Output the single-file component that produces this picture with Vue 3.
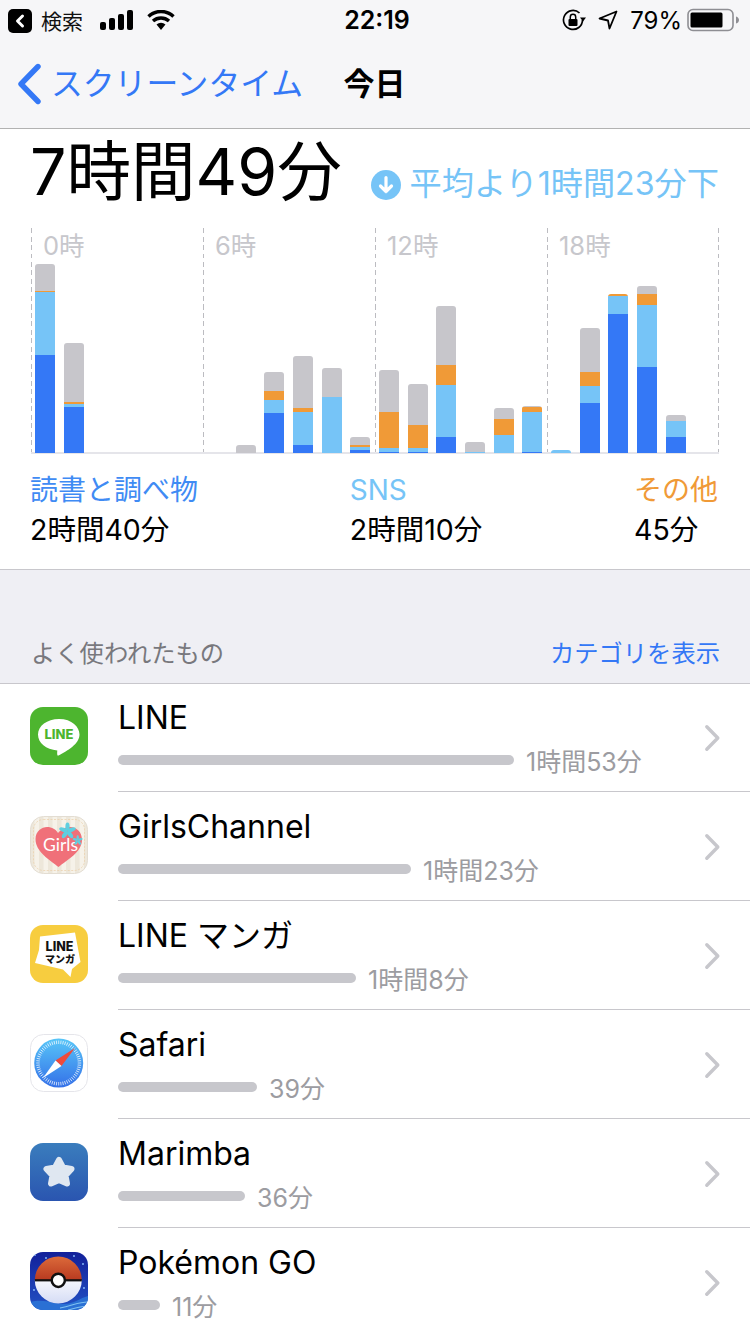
<script setup>
const hourGroups = [
  { label: '0時', bars: [
    { g: 27, o: 1, l: 63, b: 98 }, { g: 59, o: 2, l: 3, b: 46 }, null, null, null, null
  ] },
  { label: '6時', bars: [
    null, { g: 8 }, { g: 19, o: 9, l: 13, b: 40 }, { g: 52, o: 4, l: 33, b: 8 }, { g: 29, l: 56 }, { g: 8, o: 2, l: 3, b: 3 }
  ] },
  { label: '12時', bars: [
    { g: 42, o: 36, l: 4, b: 1 }, { g: 41, o: 23, l: 4, b: 1 }, { g: 59, o: 20, l: 52, b: 16 }, { g: 10, l: 1 }, { g: 11, o: 16, l: 18 }, { g: 1, o: 5, l: 40, b: 1 }
  ] },
  { label: '18時', bars: [
    { l: 3 }, { g: 44, o: 14, l: 17, b: 50 }, { o: 2, l: 18, b: 139 }, { g: 8, o: 11, l: 62, b: 86 }, { g: 6, l: 16, b: 16 }, null
  ] }
]
const segments = ['g', 'o', 'l', 'b']
const legend = [
  { name: '読書と調べ物', time: '2時間40分', cls: 'c-blue' },
  { name: 'SNS', time: '2時間10分', cls: 'c-sky' },
  { name: 'その他', time: '45分', cls: 'c-orange' }
]
const apps = [
  { name: 'LINE', width: 396, time: '1時間53分', icon: 'line' },
  { name: 'GirlsChannel', width: 293, time: '1時間23分', icon: 'girls' },
  { name: 'LINE マンガ', width: 238, time: '1時間8分', icon: 'manga' },
  { name: 'Safari', width: 139, time: '39分', icon: 'safari' },
  { name: 'Marimba', width: 127, time: '36分', icon: 'marimba' },
  { name: 'Pokémon GO', width: 42, time: '11分', icon: 'pokemon' }
]
const ticks = Array.from({ length: 60 }, (_, i) => i * 6)
const petals = [0, 72, 144, 216, 288]
</script>

<template>
  <div class="page">
    <header class="top">
      <div class="status">
        <div class="status-left">
          <svg class="chip" width="24" height="24" viewBox="0 0 24 24">
            <rect width="24" height="24" rx="5" fill="#000" />
            <path d="M14.5 7 L9.5 12 L14.5 17" fill="none" stroke="#fff" stroke-width="3" stroke-linecap="round" stroke-linejoin="round" />
          </svg>
          <span class="carrier">検索</span>
          <svg class="signal" width="33" height="20" viewBox="0 0 33 20">
            <rect x="0" y="12" width="6" height="8" rx="2" fill="#000" />
            <rect x="9" y="8" width="6" height="12" rx="2" fill="#000" />
            <rect x="18" y="4" width="6" height="16" rx="2" fill="#000" />
            <rect x="27" y="0" width="6" height="20" rx="2" fill="#000" />
          </svg>
          <svg class="wifi" width="28" height="20" viewBox="0 0 28 20">
            <path d="M1.500 6.500 A18 18 0 0 1 26.500 6.500" fill="none" stroke="#000" stroke-width="3.400" />
            <path d="M6 11 A12 12 0 0 1 22 11" fill="none" stroke="#000" stroke-width="3.400" />
            <path d="M9.500 14.500 A7 7 0 0 1 18.500 14.500 L14 20 Z" fill="#000" />
          </svg>
        </div>
        <div class="clock">22:19</div>
        <div class="status-right">
          <svg width="24" height="22" viewBox="0 0 24 22">
            <path d="M20.500 11 A9.500 9.500 0 1 1 17.500 4" fill="none" stroke="#000" stroke-width="1.700" />
            <path d="M18 8.500 L24 8.500 L21 12.500 Z" fill="#000" />
            <rect x="6.500" y="10" width="9" height="7" rx="1" fill="#000" />
            <path d="M8.300 10 V8 A2.700 2.700 0 0 1 13.700 8 V10" fill="none" stroke="#000" stroke-width="1.500" />
          </svg>
          <svg class="loc" width="20" height="20" viewBox="0 0 20 20">
            <path d="M18.500 1.500 L1.500 8.500 L10 10.500 L11.500 18.500 Z" fill="none" stroke="#000" stroke-width="1.800" stroke-linejoin="round" />
          </svg>
          <span class="pct">79%</span>
          <svg class="batt" width="52" height="24" viewBox="0 0 52 24">
            <rect x="1" y="1.500" width="45" height="21" rx="5" fill="none" stroke="#8e8e93" stroke-width="1.600" />
            <rect x="3.500" y="4.500" width="32" height="15" rx="1.500" fill="#000" />
            <path d="M49 8.500 C51 9 52 10.500 52 12 C52 13.500 51 15 49 15.500 Z" fill="#8e8e93" />
          </svg>
        </div>
      </div>
      <nav class="nav">
        <div class="back">
          <svg width="26" height="42" viewBox="0 0 26 42">
            <path d="M22 3.500 L5 21 L22 38.500" fill="none" stroke="#3478f6" stroke-width="5.400" stroke-linecap="round" stroke-linejoin="round" />
          </svg>
          <span>スクリーンタイム</span>
        </div>
        <div class="nav-title">今日</div>
        <div></div>
      </nav>
    </header>

    <section class="summary">
      <div class="headline">
        <h1 class="total">7時間49分</h1>
        <div class="avg">
          <svg width="30" height="30" viewBox="0 0 30 30">
            <circle cx="15" cy="15" r="15" fill="#76c4f7" />
            <path d="M15 7.500 V21.500 M9.500 16 L15 21.500 L20.500 16" fill="none" stroke="#fff" stroke-width="3.200" stroke-linecap="round" stroke-linejoin="round" />
          </svg>
          <span>平均より1時間23分下</span>
        </div>
      </div>

      <div class="chart">
        <div v-for="group in hourGroups" :key="group.label" class="group">
          <span class="hour">{{ group.label }}</span>
          <div v-for="(bar, i) in group.bars" :key="i" class="slot">
            <div v-if="bar" class="bar">
              <template v-for="s in segments" :key="s">
                <div v-if="bar[s]" :class="['seg', 'seg-' + s]" :style="{ height: bar[s] + 'px' }"></div>
              </template>
            </div>
          </div>
        </div>
      </div>

      <div class="legend">
        <div v-for="item in legend" :key="item.name" class="legend-item">
          <div :class="['legend-name', item.cls]">{{ item.name }}</div>
          <div class="legend-time">{{ item.time }}</div>
        </div>
      </div>
    </section>

    <div class="list-head">
      <span class="list-title">よく使われたもの</span>
      <span class="list-link">カテゴリを表示</span>
    </div>

    <ul class="list">
      <li v-for="app in apps" :key="app.name" class="row">
        <div class="icon">
          <svg v-if="app.icon === 'line'" width="58" height="58" viewBox="0 0 58 58">
            <rect width="58" height="58" rx="13" fill="#4db52f" />
            <path d="M29 12 C42 12 49.500 20 49.500 27.500 C49.500 37 37 44 28.500 48.500 C27 49.300 27 46.500 27.300 43.500 C16 42.500 8 36 8 27.500 C8 19 17 12 29 12 Z" fill="#fff" />
            <text x="29" y="31.500" text-anchor="middle" class="t-line">LINE</text>
          </svg>
          <svg v-else-if="app.icon === 'girls'" width="58" height="58" viewBox="0 0 58 58">
            <defs>
              <pattern id="stripe" width="9" height="9" patternUnits="userSpaceOnUse">
                <rect width="9" height="9" fill="#f6f2e9" />
                <rect width="4.500" height="9" fill="#ede7da" />
              </pattern>
            </defs>
            <rect x=".5" y=".5" width="57" height="57" rx="13" fill="url(#stripe)" stroke="#e3ddd2" />
            <rect x="3.500" y="3.500" width="51" height="51" rx="10" fill="none" stroke="#ebcfa8" stroke-width=".7" stroke-dasharray="2 1.500" />
            <path d="M28.500 51 C20 44 5.500 36 5.500 23 C5.500 15 12 11 17 11 C22 11 26 13.500 28 17 C31 13.500 35 11 40 11 C47 11 52 16.500 52 24 C52 36 37 44 28.500 51 Z" fill="#f07079" />
            <text x="13" y="34.500" class="t-girls">Girls</text>
            <g fill="#5fcfe0">
              <ellipse v-for="p in petals" :key="p" cx="37.500" cy="10.600" rx="2.100" ry="4.200" :transform="`rotate(${p} 37.500 15)`" />
              <ellipse v-for="p in petals" :key="'s' + p" cx="47.700" cy="21.600" rx="1.200" ry="2.500" :transform="`rotate(${p} 47.700 24.300)`" />
            </g>
          </svg>
          <svg v-else-if="app.icon === 'manga'" width="58" height="58" viewBox="0 0 58 58">
            <rect width="58" height="58" rx="13" fill="#f7cd3f" />
            <path d="M10 11.500 L45 7.500 L50.500 37 L42 44 L40.500 52 L33 44.500 L5 38 L9 25 Z" fill="#fff" />
            <text text-anchor="middle">
              <tspan x="29.500" y="26" class="t-manga1">LINE</tspan>
              <tspan x="30" y="37.500" class="t-manga2">マンガ</tspan>
            </text>
          </svg>
          <svg v-else-if="app.icon === 'safari'" width="58" height="58" viewBox="0 0 58 58">
            <defs>
              <linearGradient id="saf" x1="0" y1="0" x2="0" y2="1">
                <stop offset="0" stop-color="#58c6f8" />
                <stop offset="1" stop-color="#3470e8" />
              </linearGradient>
            </defs>
            <rect x=".5" y=".5" width="57" height="57" rx="13" fill="#fff" stroke="#e5e5ea" />
            <circle cx="28.700" cy="29" r="24.500" fill="url(#saf)" />
            <g stroke="#fff" stroke-width=".8" opacity=".85">
              <line v-for="t in ticks" :key="t" x1="28.700" y1="6.500" x2="28.700" y2="10" :transform="`rotate(${t} 28.700 29)`" />
            </g>
            <path d="M45 14 L31.500 32 L25.500 26.500 Z" fill="#ef4a3c" />
            <path d="M13 44 L25.500 26.500 L31.500 32 Z" fill="#fff" />
          </svg>
          <svg v-else-if="app.icon === 'marimba'" width="58" height="58" viewBox="0 0 58 58">
            <defs>
              <linearGradient id="mar" x1="0" y1="0" x2="0" y2="1">
                <stop offset="0" stop-color="#3a7dbd" />
                <stop offset="1" stop-color="#2a55b0" />
              </linearGradient>
            </defs>
            <rect width="58" height="58" rx="13" fill="url(#mar)" />
            <path d="M29 17 L33 24.500 L41.500 26 L35.500 32.500 L37 40.500 L29 37 L21 40.500 L22.500 32.500 L16.500 26 L25 24.500 Z" fill="#dfe7f1" stroke="#dfe7f1" stroke-width="6" stroke-linejoin="round" />
          </svg>
          <svg v-else width="58" height="58" viewBox="0 0 58 58">
            <defs>
              <linearGradient id="sky" x1="0" y1="0" x2="0" y2="1">
                <stop offset="0" stop-color="#12209a" />
                <stop offset="1" stop-color="#2352c4" />
              </linearGradient>
              <linearGradient id="red" x1="0" y1="0" x2="0" y2="1">
                <stop offset="0" stop-color="#dc6a3a" />
                <stop offset="1" stop-color="#b83a20" />
              </linearGradient>
              <linearGradient id="wht" x1="0" y1="0" x2="0" y2="1">
                <stop offset="0" stop-color="#f6f7fd" />
                <stop offset="1" stop-color="#d5dcf5" />
              </linearGradient>
              <clipPath id="clip"><rect width="58" height="58" rx="13" /></clipPath>
            </defs>
            <g clip-path="url(#clip)">
              <rect width="58" height="58" fill="url(#sky)" />
              <path d="M5 3 h0 M16 6 h0 M44 4 h0 M53 12 h0 M4 38 h0 M54 36 h0" stroke="#8fc4ff" stroke-width="1.800" stroke-linecap="round" />
              <path d="M0 50 C14 46 24 52 34 52 C44 52 50 46 58 44 V58 H0 Z" fill="#2a70d4" />
              <path d="M30 56 C42 54 48 50 58 50 M38 58 C46 56 52 54 58 54" fill="none" stroke="#7fc0f0" stroke-width="1.100" />
            </g>
            <path d="M4.800 28 A23.500 23.500 0 0 1 51.800 28 Z" fill="url(#red)" />
            <path d="M4.800 28 A23.500 23.500 0 0 0 51.800 28 Z" fill="url(#wht)" />
            <rect x="4.800" y="27.200" width="47" height="2.200" fill="#111" />
            <circle cx="28.300" cy="28.300" r="6.600" fill="#fff" stroke="#111" stroke-width="2.500" />
          </svg>
        </div>
        <div class="row-main">
          <div class="app-name">{{ app.name }}</div>
          <div class="usage">
            <div class="usage-bar" :style="{ width: app.width + 'px' }"></div>
            <span class="usage-time">{{ app.time }}</span>
          </div>
          <svg class="chevron" width="18" height="28" viewBox="0 0 18 28">
            <path d="M2.800 2.800 L13.800 14 L2.800 25.200" fill="none" stroke="#c7c7cc" stroke-width="3.400" stroke-linecap="round" stroke-linejoin="round" />
          </svg>
        </div>
      </li>
    </ul>
  </div>
</template>

<style>
html, body { margin: 0; padding: 0; background: #fff; }
</style>

<style scoped>
.page {
  width: 750px;
  height: 1334px;
  overflow: hidden;
  background: #fff;
  font-family: Inter, "Noto Sans CJK JP", sans-serif;
  color: #000;
}
.top {
  height: 128px;
  background: #f6f6f8;
  border-bottom: 1px solid #b2b2b2;
}
.status {
  height: 40px;
  display: grid;
  grid-template-columns: 1fr auto 1fr;
  align-items: center;
  padding: 0 11px 0 8px;
}
.status-left { display: flex; align-items: center; }
.chip { margin-top: 2px; }
.carrier { font-size: 21px; margin-left: 9px; color: #111; }
.signal { margin-left: 17px; }
.wifi { margin-left: 14px; }
.clock { font-size: 25px; font-weight: 600; margin-left: 7px; }
.status-right { display: flex; align-items: center; justify-content: flex-end; }
.loc { margin-left: 12px; }
.pct { font-size: 24px; margin-left: 12px; }
.batt { margin-left: 5px; }
.nav {
  height: 88px;
  display: grid;
  grid-template-columns: 1fr auto 1fr;
  align-items: center;
}
.back {
  display: flex;
  align-items: center;
  padding-left: 16px;
  color: #3478f6;
  font-size: 31.800px;
}
.back span { margin-left: 9px; margin-bottom: 6px; }
.nav-title { font-size: 31px; font-weight: 700; margin: 0 0 6px -1px; }
.summary {
  height: 441px;
  padding: 0 31px;
  box-sizing: border-box;
  border-bottom: 1px solid #c8c7cc;
}
.headline {
  display: flex;
  justify-content: space-between;
  align-items: flex-start;
  height: 99px;
}
.total {
  margin: 0 0 0 -1px;
  font-size: 64.500px;
  font-weight: 400;
  line-height: 86px;
}
.avg {
  display: flex;
  align-items: center;
  gap: 9px;
  margin-top: 40px;
  color: #76c4f7;
  font-size: 32.200px;
  line-height: 30px;
  white-space: nowrap;
}
.avg span { margin-bottom: 1px; }
.chart {
  display: flex;
  height: 226px;
  border-bottom: 2px solid #e5e5ea;
  box-sizing: border-box;
  background: repeating-linear-gradient(to bottom, #bcbcc1 0 5px, transparent 5px 8.500px) right top / 1px 100% no-repeat;
}
.group {
  position: relative;
  flex: 1;
  display: flex;
  align-items: flex-end;
  background: repeating-linear-gradient(to bottom, #bcbcc1 0 5px, transparent 5px 8.500px) left top / 1px 100% no-repeat;
}
.hour {
  position: absolute;
  left: 12px;
  top: -3px;
  font-size: 25.500px;
  color: #c7c7cc;
}
.slot {
  flex: 1;
  display: flex;
  justify-content: flex-start;
  padding-left: 4px;
  margin-bottom: -1px;
}
.bar {
  width: 20px;
  border-radius: 3px 3px 0 0;
  overflow: hidden;
  display: flex;
  flex-direction: column;
}
.seg-g { background: #c7c6cb; }
.seg-o { background: #f09a37; }
.seg-l { background: #76c4f7; }
.seg-b { background: #3478f6; }
.legend {
  display: flex;
  justify-content: space-between;
  margin: 16px 1px 0 -1px;
}
.legend-name { font-size: 28px; line-height: 40px; }
.legend-time { font-size: 28.500px; line-height: 40px; }
.c-blue { color: #3f8bf4; }
.c-sky { color: #76c4f7; }
.c-orange { color: #f09a37; }
.list-head {
  height: 114px;
  box-sizing: border-box;
  background: #efeff4;
  border-bottom: 1px solid #c8c7cc;
  display: flex;
  justify-content: space-between;
  align-items: flex-end;
  padding: 0 30px 13px 31px;
  font-size: 24.300px;
  line-height: 34px;
}
.list-title { color: #78787d; }
.list-link { color: #3478f6; }
.list { margin: 0; padding: 0; list-style: none; }
.row {
  height: 109px;
  display: flex;
  padding-left: 30px;
}
.icon { width: 58px; height: 58px; margin-top: 23px; flex: none; }
.icon svg { display: block; }
.row-main {
  position: relative;
  flex: 1;
  height: 108px;
  box-sizing: border-box;
  margin-left: 30px;
  border-bottom: 1px solid #c8c7cc;
}
.row:last-child .row-main { border-bottom: 0; }
.app-name {
  font-size: 32px;
  line-height: 40px;
  padding-top: 14px;
}
.usage {
  display: flex;
  align-items: center;
  gap: 12px;
  margin-top: 7px;
  height: 30px;
}
.usage-bar {
  height: 10px;
  border-radius: 5px;
  background: #c7c7cc;
}
.usage-time { font-size: 25px; color: #9c9ca1; margin-bottom: 1px; }
.chevron { position: absolute; right: 28px; top: 40px; }
.t-line { font-family: Inter, sans-serif; font-size: 13px; font-weight: 800; fill: #4db52f; }
.t-girls { font-family: Lato, sans-serif; font-size: 17.500px; font-weight: 400; fill: #fff; }
.t-manga1 { font-family: Inter, sans-serif; font-size: 12.500px; font-weight: 800; fill: #111; }
.t-manga2 { font-family: "Noto Sans CJK JP", sans-serif; font-size: 10px; font-weight: 900; fill: #111; }
</style>
